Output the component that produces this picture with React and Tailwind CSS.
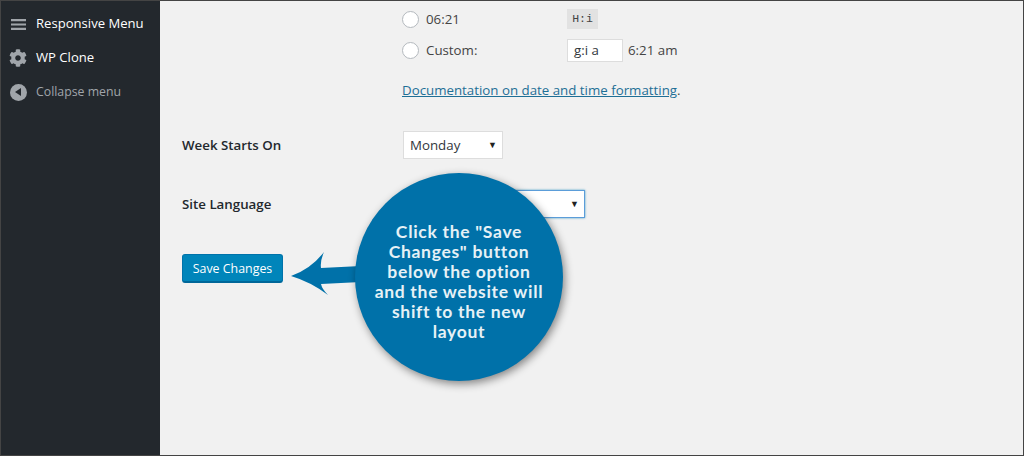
import { FaCog } from 'react-icons/fa';

function RadioRow({ label, children }) {
  return (
    <div className="flex items-center h-[31px]">
      <span className="w-[17px] h-[17px] rounded-full bg-white border border-[#b4b9be] mr-[7px] shrink-0" />
      <span className="w-[141px] text-[13.3px] text-[#444]">{label}</span>
      {children}
    </div>
  );
}

function SettingRow({ label, children, className }) {
  return (
    <div className={`flex items-center ${className}`}>
      <div className="w-[221px] pt-[2px] text-[13.3px] font-semibold text-[#23282d]">{label}</div>
      {children}
    </div>
  );
}

export default function App() {
  return (
    <div className="relative flex w-[1024px] h-[456px] overflow-hidden bg-[#f1f1f1] border border-[#444] font-['Open_Sans',sans-serif]">
      {/* admin sidebar */}
      <div className="w-[159px] shrink-0 bg-[#23282d] pt-[6px] text-[13.1px]">
        <div className="flex items-center h-[34px] pl-[10px] text-white">
          <svg width="15" height="11" viewBox="0 0 15 11" className="mr-[10px]">
            <path d="M0 0h15v2.2H0zM0 4.4h15v2.2H0zM0 8.8h15V11H0z" fill="#a0a5aa" />
          </svg>
          Responsive Menu
        </div>
        <div className="flex items-center h-[34px] pl-[8px] text-white">
          <FaCog size={18} className="text-[#a0a5aa] mr-[9px]" />
          WP Clone
        </div>
        <div className="flex items-center h-[34px] pl-[9px] text-[12.3px] text-[#a0a5aa]">
          <span className="flex items-center justify-center w-[17px] h-[17px] rounded-full bg-[#a0a5aa] mr-[9px]">
            <span className="w-0 h-0 border-y-[4px] border-y-transparent border-r-[6px] border-r-[#23282d] mr-[2px]" />
          </span>
          Collapse menu
        </div>
      </div>

      {/* settings form */}
      <div className="flex-1 pl-[22px] pt-[3px]">
        <div className="pl-[220px]">
          <RadioRow label="06:21">
            <code className="bg-[#e2e2e2] w-[31px] h-[20px] text-center leading-[20px] text-[11.5px] font-['Liberation_Mono',monospace] text-[#444] mb-[1px]">H:i</code>
          </RadioRow>
          <RadioRow label="Custom:">
            <span className="w-[56px] h-[23px] bg-white border border-[#ddd] text-[13.3px] text-[#32373c] pl-[6px] leading-[21px]">g:i a</span>
            <span className="ml-[5px] text-[13.3px] text-[#444]">6:21 am</span>
          </RadioRow>
          <p className="mt-[15px] text-[13.3px] text-[#444]">
            <a className="underline text-[#1e6f96]">Documentation on date and time formatting</a>.
          </p>
        </div>

        <SettingRow label="Week Starts On" className="mt-[30px]">
          <div className="flex items-center justify-between w-[100px] h-[28px] bg-white border border-[#ddd] pl-[6px] pr-[5px] text-[13.3px] text-[#32373c]">
            <span className="pt-[2px]">Monday</span>
            <span className="text-[9px] text-[#222]">▼</span>
          </div>
        </SettingRow>

        <SettingRow label={<span className="block pt-[1px]">Site Language</span>} className="mt-[31px]">
          <div className="flex items-center justify-end w-[182px] h-[28px] bg-white border border-[#5b9dd9] pr-[5px] shadow-[0_0_2px_rgba(30,140,190,0.8)]">
            <span className="text-[9px] text-[#222]">▼</span>
          </div>
        </SettingRow>

        <button className="block mt-[36px] w-[101px] h-[29px] pt-[3px] bg-[#0085ba] border border-[#0073aa] border-b-2 border-b-[#006799] rounded-[3px] text-[12.4px] text-white">
          Save Changes
        </button>
      </div>

      {/* callout */}
      <svg className="absolute left-[290px] top-[250px]" width="72" height="46" viewBox="0 0 72 46">
        <path d="M0 25 Q20 18 33 1 Q29 10 30 17 L70 15 L70 31 L30 33 Q31 38 37 44 Q20 31 0 25 Z" fill="#0071a9" />
      </svg>
      <div className="absolute left-[354px] top-[172px] flex flex-col items-center justify-center w-[208px] h-[208px] pt-[9px] rounded-full bg-[#0071a9] text-center text-[17.5px] leading-[20px] font-bold tracking-[0.7px] text-[#e6f1f6] font-['Lato',sans-serif] shadow-[2px_3px_8px_rgba(0,0,0,0.45)]">
        <span>Click the "Save</span>
        <span>Changes" button</span>
        <span>below the option</span>
        <span>and the website will</span>
        <span>shift to the new</span>
        <span>layout</span>
      </div>
    </div>
  );
}
